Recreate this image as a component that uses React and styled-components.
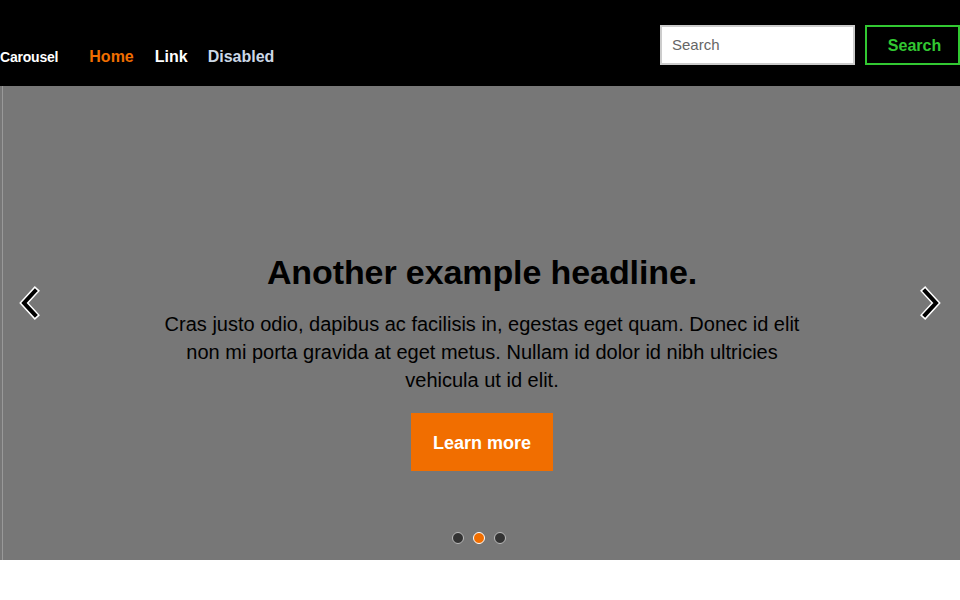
import styled, { createGlobalStyle } from "styled-components";

const GlobalStyle = createGlobalStyle`
  html, body {
    margin: 0;
    padding: 0;
    background: #fff;
    font-family: "Liberation Sans", Arial, sans-serif;
  }
`;

const Navbar = styled.nav`
  height: 86px;
  background: #000;
  display: flex;
  align-items: center;
  justify-content: space-between;
`;

const Left = styled.div`
  display: flex;
  align-items: baseline;
  padding-top: 28px;
`;

const Brand = styled.a`
  color: #fff;
  font-size: 14px;
  font-weight: 700;
  margin-right: 31px;
  letter-spacing: -0.2px;
`;

const NavLink = styled.a`
  color: ${p => p.color || "#fff"};
  font-size: 16px;
  font-weight: 700;
  margin-right: ${p => p.gap || 21}px;
`;

const Form = styled.form`
  display: flex;
  align-items: center;
  gap: 10px;
  margin-top: 3px;
`;

const SearchInput = styled.input`
  width: 195px;
  height: 40px;
  box-sizing: border-box;
  border: 2px solid #ccc;
  padding: 0 10px;
  font-size: 15px;
  font-family: "Liberation Sans", Arial, sans-serif;
  &::placeholder {
    color: #666;
  }
`;

const SearchButton = styled.button`
  width: 95px;
  height: 40px;
  box-sizing: border-box;
  background: #000;
  border: 2px solid #32c832;
  color: #32c832;
  font-weight: 700;
  font-size: 16px;
  font-family: "Liberation Sans", Arial, sans-serif;
  padding: 2px 0 0 4px;
  display: flex;
  align-items: center;
  justify-content: center;
`;

const Carousel = styled.div`
  position: relative;
  height: 474px;
  background: linear-gradient(to right, #777 2px, #999 2px, #999 3px, #777 3px);
  display: flex;
  flex-direction: column;
  align-items: center;
  justify-content: flex-end;
`;

const Caption = styled.div`
  text-align: center;
  width: 660px;
  padding-bottom: 89px;
  margin-left: 4px;
`;

const Headline = styled.h1`
  margin: 0 0 18px;
  font-size: 34px;
  line-height: 39px;
  font-weight: 700;
  color: #000;
  letter-spacing: -0.1px;
`;

const Text = styled.p`
  margin: 0 0 19px;
  font-size: 20px;
  line-height: 28px;
  color: #000;
`;

const LearnMore = styled.a`
  display: inline-block;
  background: #f16e00;
  color: #fff;
  font-weight: 700;
  font-size: 18px;
  padding: 21px 22px 18px;
  line-height: 19px;
`;

const Arrow = styled.div`
  position: absolute;
  top: 200px;
  ${p => (p.side === "left" ? "left: 17px;" : "right: 17px;")}
  width: 28px;
  height: 34px;
`;

const Indicators = styled.ol`
  position: absolute;
  bottom: 16px;
  left: 0;
  right: 2px;
  margin: 0;
  padding: 0;
  list-style: none;
  display: flex;
  justify-content: center;
  gap: 9px;
`;

const Dot = styled.li`
  width: 12px;
  height: 12px;
  box-sizing: border-box;
  border-radius: 50%;
  border: 1px solid #bbb;
  background: ${p => (p.active ? "#f16e00" : "#333")};
  ${p => p.active && "border-color: #fff;"}
`;

const Chevron = ({ dir }) => (
  <svg width="28" height="34" viewBox="0 0 28 34">
    <path
      d={dir === "left" ? "M18 5 L7 17 L18 29" : "M10 5 L21 17 L10 29"}
      fill="none"
      stroke="#fff"
      strokeWidth="7"
      strokeLinejoin="miter"
      strokeLinecap="square"
    />
    <path
      d={dir === "left" ? "M18 5 L7 17 L18 29" : "M10 5 L21 17 L10 29"}
      fill="none"
      stroke="#000"
      strokeWidth="4"
      strokeLinejoin="miter"
      strokeLinecap="square"
    />
  </svg>
);

export default function App() {
  return (
    <>
      <GlobalStyle />
      <Navbar>
        <Left>
          <Brand>Carousel</Brand>
          <NavLink color="#f16e00">Home</NavLink>
          <NavLink gap={20}>Link</NavLink>
          <NavLink color="#ccd8e6">Disabled</NavLink>
        </Left>
        <Form onSubmit={e => e.preventDefault()}>
          <SearchInput placeholder="Search" />
          <SearchButton>Search</SearchButton>
        </Form>
      </Navbar>
      <Carousel>
        <Arrow side="left">
          <Chevron dir="left" />
        </Arrow>
        <Caption>
          <Headline>Another example headline.</Headline>
          <Text>
            Cras justo odio, dapibus ac facilisis in, egestas eget quam. Donec
            id elit non mi porta gravida at eget metus. Nullam id dolor id nibh
            ultricies vehicula ut id elit.
          </Text>
          <LearnMore>Learn more</LearnMore>
        </Caption>
        <Arrow side="right">
          <Chevron dir="right" />
        </Arrow>
        <Indicators>
          <Dot />
          <Dot active />
          <Dot />
        </Indicators>
      </Carousel>
    </>
  );
}
